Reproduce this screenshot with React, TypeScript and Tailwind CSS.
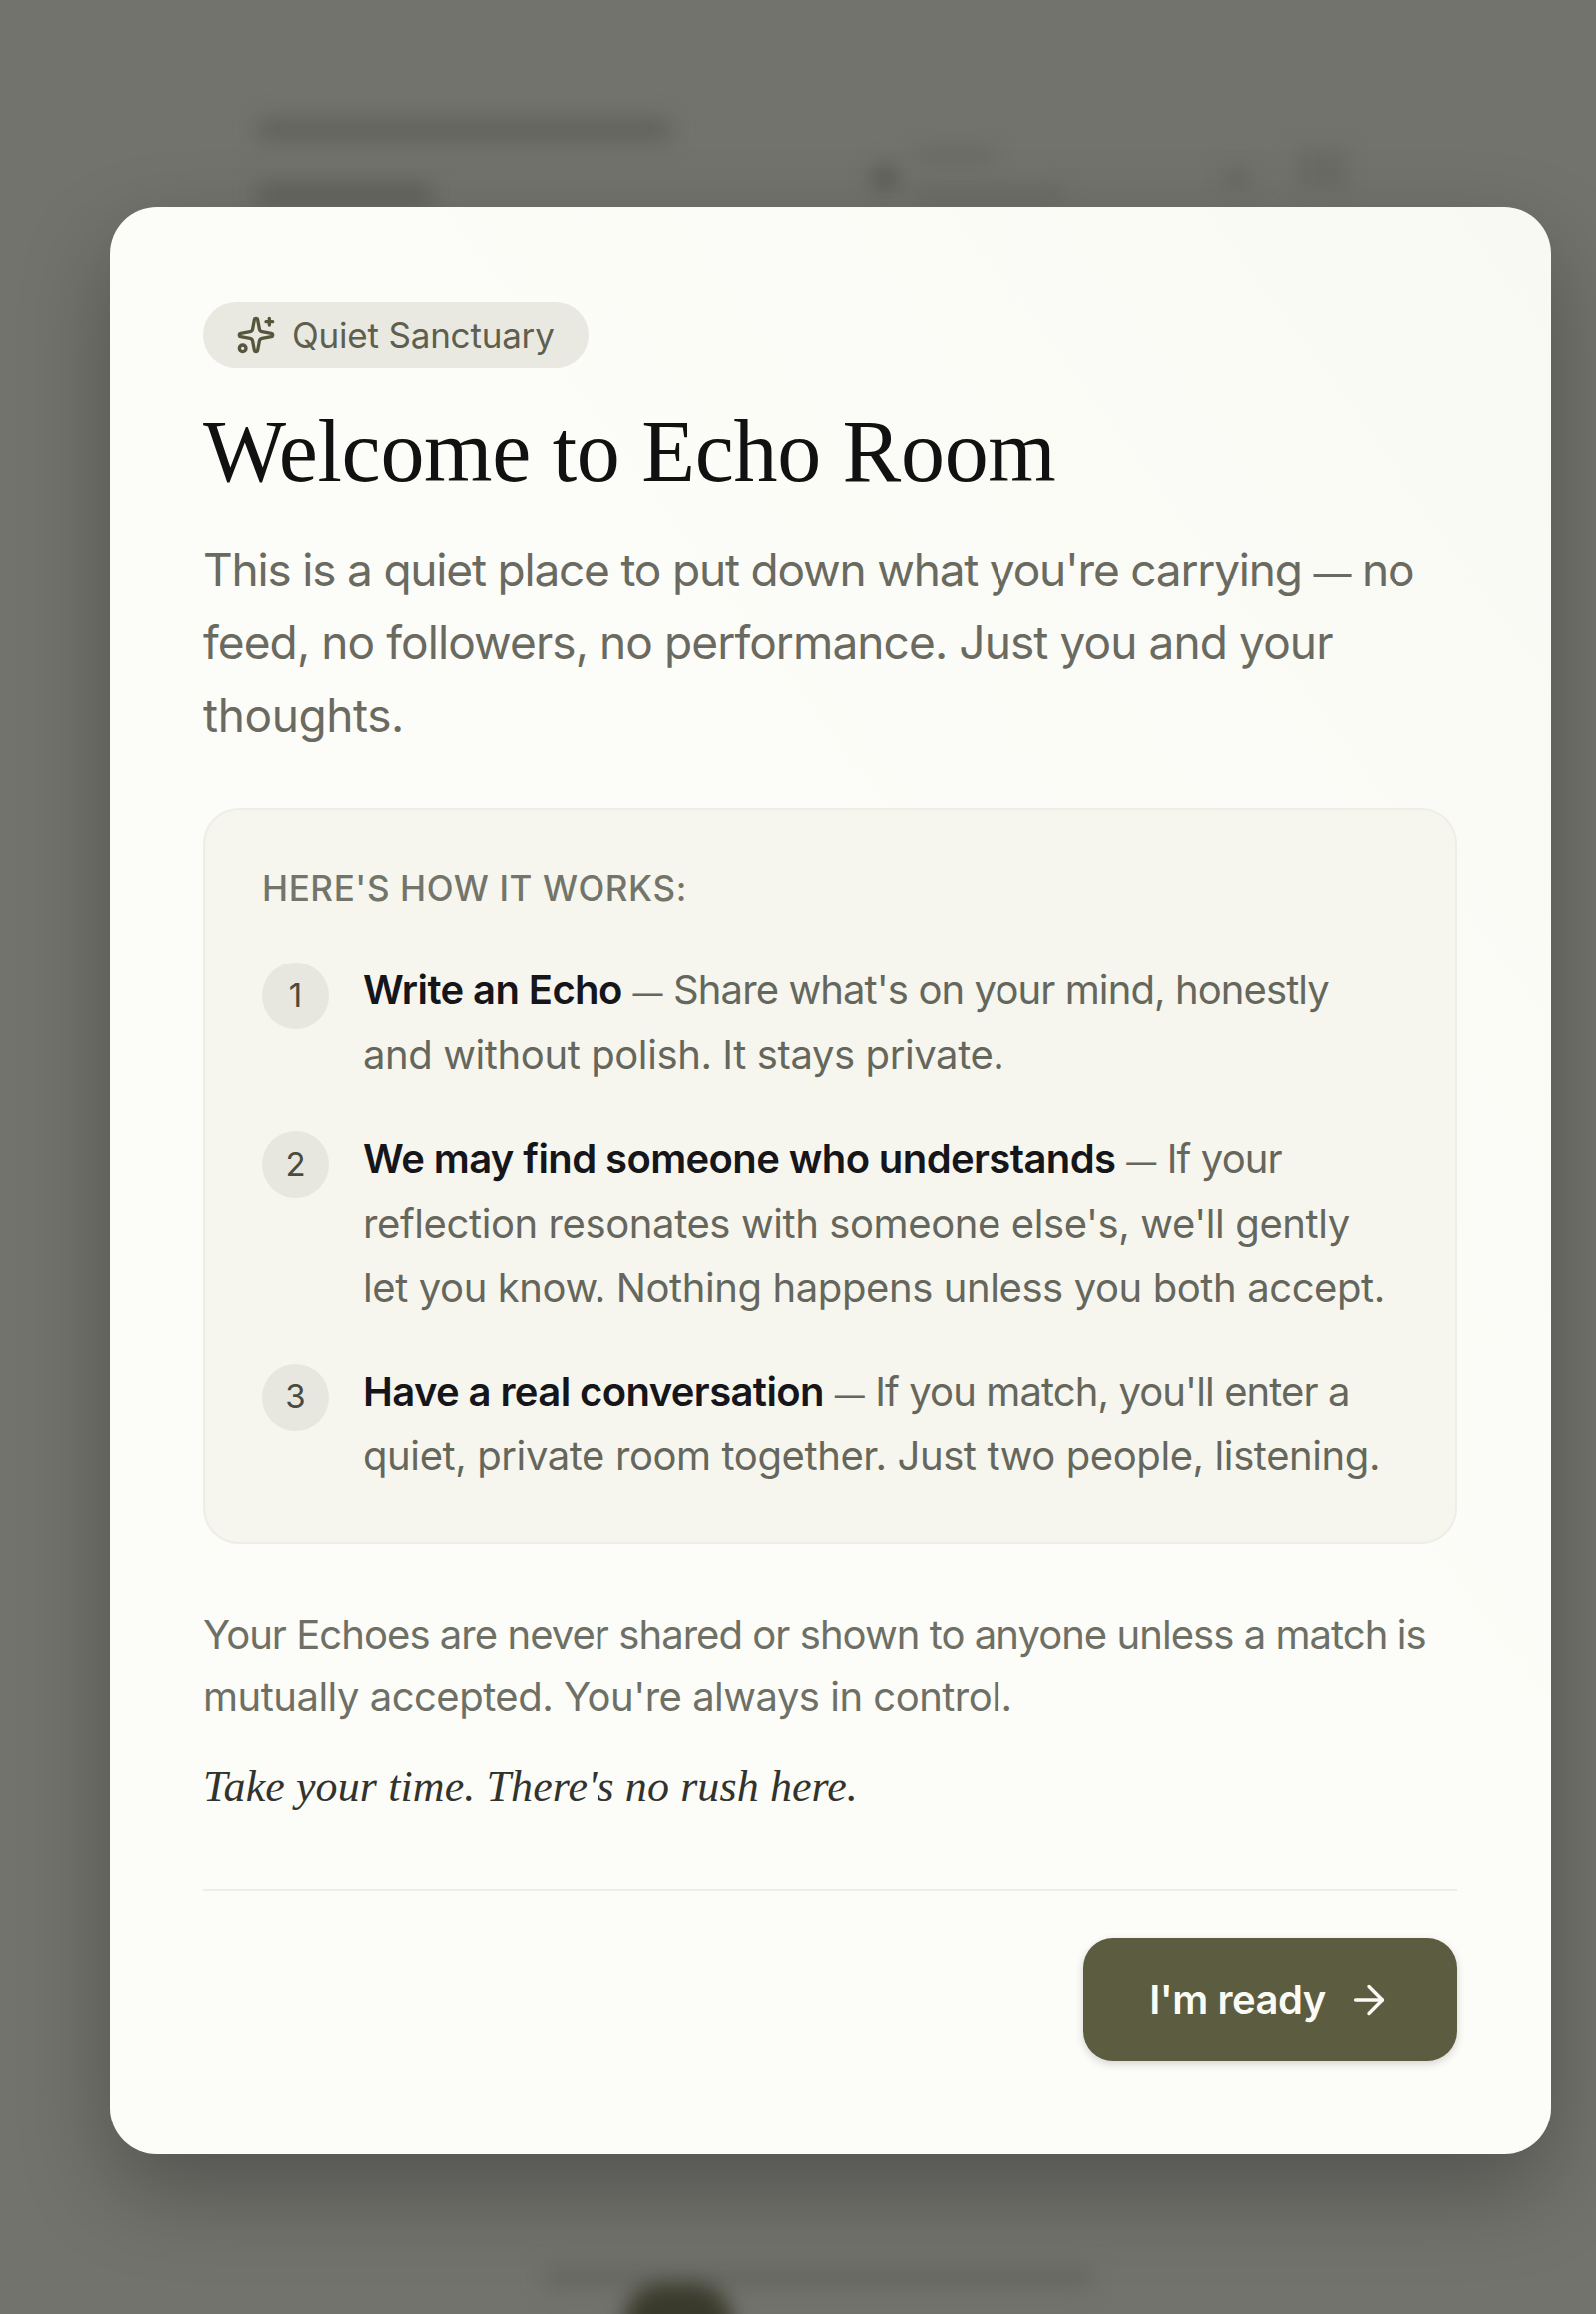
import { ArrowRight, Sparkles } from "lucide-react";

const STEPS = [
  {
    n: "1",
    title: "Write an Echo",
    lines: ["Share what's on your mind, honestly", "and without polish. It stays private."],
  },
  {
    n: "2",
    title: "We may find someone who understands",
    lines: ["If your", "reflection resonates with someone else's, we'll gently", "let you know. Nothing happens unless you both accept."],
  },
  {
    n: "3",
    title: "Have a real conversation",
    lines: ["If you match, you'll enter a", "quiet, private room together. Just two people, listening."],
  },
];

const SANS = "font-['Inter','Liberation_Sans',sans-serif]";
const SERIF = "font-['Liberation_Serif',serif]";

// the page behind the dialog, only visible as smudges through the backdrop blur
function BlurredPage() {
  return (
    <div className="absolute inset-0 flex flex-col justify-between blur-[10px]">
      <div className="flex items-start pl-[258px] pr-[250px] pt-[118px]">
        <div className="flex w-[615px] flex-col gap-[40px]">
          <div className="h-[24px] w-[415px] bg-[#62635d]" />
          <div className="h-[26px] w-[175px] bg-[#62635d]" />
        </div>
        <div className="mt-[30px] flex gap-[16px]">
          <div className="mt-[16px] h-[28px] w-[28px] rounded-full bg-[#5c5d57]" />
          <div className="flex flex-col gap-[26px]">
            <div className="h-[14px] w-[80px] bg-[#686963]" />
            <div className="h-[14px] w-[150px] bg-[#686963]" />
          </div>
        </div>
        <div className="ml-auto mt-[50px] flex gap-[45px]">
          <div className="h-[20px] w-[30px] bg-[#686963]" />
          <div className="-mt-[20px] h-[40px] w-[50px] bg-[#6a6b65]" />
        </div>
      </div>
      <div className="flex flex-col items-center">
        <div className="ml-[40px] h-[24px] w-[550px] bg-[#686963]" />
        <div className="-mb-[50px] mr-[240px] mt-[-6px] h-[80px] w-[110px] rounded-full bg-[#3a3a2c]" />
      </div>
    </div>
  );
}

export default function App() {
  return (
    <div className={`relative h-[2320px] overflow-hidden bg-[#72736d] ${SANS}`}>
      <BlurredPage />
      <div className="relative pl-[110px] pt-[208px]">
        <div className="h-[1952px] w-[1445px] rounded-[47px] bg-gradient-to-bl from-[#f9f9f4] to-[#fcfcf8] to-40% px-[94px] pt-[95px] shadow-[0_36px_90px_rgba(0,0,0,0.28)]">
          <div className="inline-flex h-[66px] w-[386px] items-center gap-[16px] rounded-full bg-[#e9e9e2] pl-[33px]">
            <Sparkles className="h-[40px] w-[40px] text-[#56563c]" strokeWidth={2} />
            <span className="text-[35px] tracking-[-0.2px] text-[#5e5f4e]">Quiet Sanctuary</span>
          </div>

          <h1 className={`mt-[34px] text-[88px] leading-[100px] tracking-[-0.3px] text-[#111111] ${SERIF}`}>
            Welcome to Echo Room
          </h1>

          <p className="mt-[32px] text-[46px] leading-[73px] tracking-[-0.9px] text-[#6a6a60]">
            <span className="tracking-[-1.2px]">
              This is a quiet place to put down what you're carrying <span className="text-[38px] leading-none">—</span> no
            </span>
            <br />
            feed, no followers, no performance. Just you and your
            <br />
            <span className="tracking-[-0.4px]">thoughts.</span>
          </p>

          <div className="mt-[56px] h-[738px] rounded-[36px] border-2 border-[#eeeee6] bg-[#f6f6ef] px-[57px] pt-[54px]">
            <div className="text-[35px] font-medium leading-[48px] tracking-[0.6px] text-[#74756a]">HERE'S HOW IT WORKS:</div>
            <div className="mt-[47px] flex flex-col gap-[40px]">
              {STEPS.map((s) => (
                <div key={s.n} className="flex gap-[34px]">
                  <div className="mt-[4px] flex h-[67px] w-[67px] shrink-0 items-center justify-center rounded-full bg-[#e7e7df] text-[33px] text-[#4a4b3c]">
                    {s.n}
                  </div>
                  <div className="text-[40px] leading-[64.5px] tracking-[-0.4px] text-[#66675c]">
                    <span className="font-semibold tracking-[-0.6px] text-[#15151a]">{s.title}</span>{" "}
                    <span className="text-[30px] leading-none">—</span>{" "}
                    <span className="tracking-[-0.9px]">{s.lines[0]}</span>
                    {s.lines.slice(1).map((l) => (
                      <div key={l}>{l}</div>
                    ))}
                  </div>
                </div>
              ))}
            </div>
          </div>

          <p className="mt-[60px] text-[40px] leading-[62px] text-[#6e6f65]">
            <span className="tracking-[-0.95px]">Your Echoes are never shared or shown to anyone unless a match is</span>
            <br />
            <span className="tracking-[-0.5px]">mutually accepted. You're always in control.</span>
          </p>
          <p className={`mt-[29px] text-[44px] italic leading-[62px] tracking-[0.1px] text-[#33332e] ${SERIF}`}>
            Take your time. There's no rush here.
          </p>

          <div className="mt-[71px] border-t-2 border-[#eeeee8] pt-[47px]">
            <div className="flex justify-end">
              <button className="flex h-[123px] w-[375px] items-center justify-center gap-[20px] rounded-[30px] bg-[#5c5c40] text-[40px] font-semibold tracking-[-0.5px] text-[#fbfbf5] shadow-[0_3px_8px_rgba(0,0,0,0.16)]">
                I'm ready
                <ArrowRight className="h-[46px] w-[46px]" strokeWidth={1.8} />
              </button>
            </div>
          </div>
        </div>
      </div>
    </div>
  );
}
